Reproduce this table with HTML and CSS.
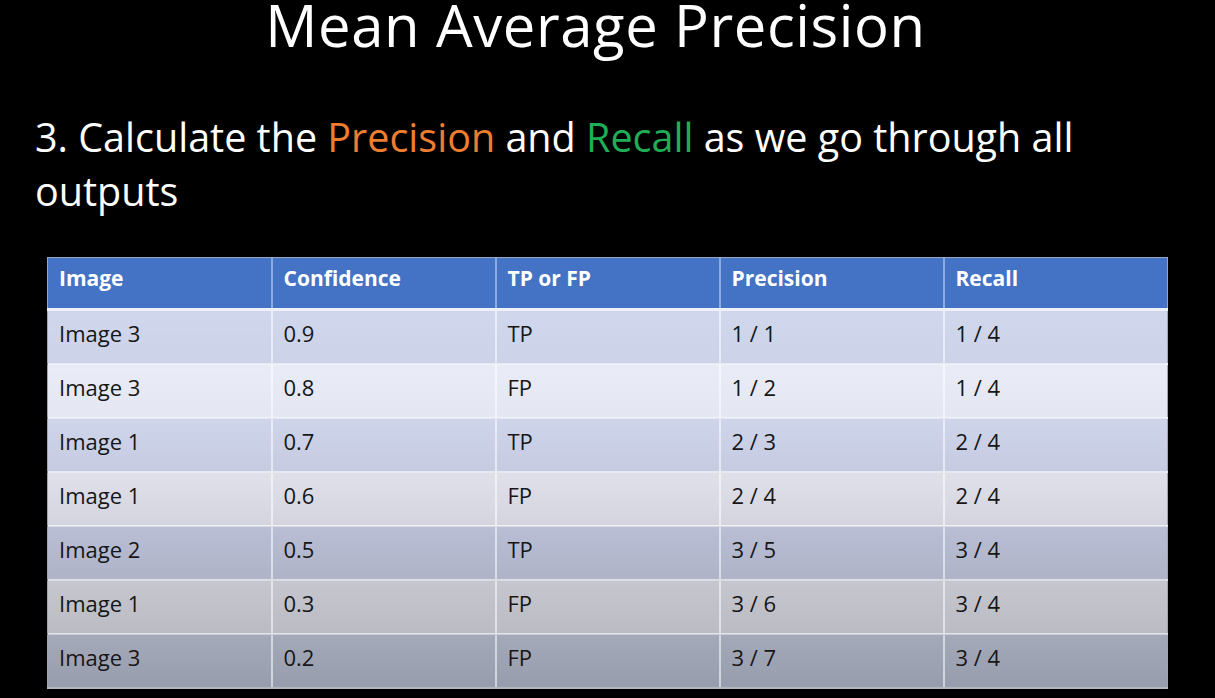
FILE: index.html
```html
<!DOCTYPE html>
<html>
<head>
<meta charset="utf-8">
<link rel="stylesheet" href="styles.css">
</head>
<body>
<div class="slide">
  <h1 class="title">Mean Average Precision</h1>
  <p class="subtitle">3. Calculate the <span class="prec">Precision</span> and <span class="rec">Recall</span> as we go through all outputs</p>
  <table class="grid">
    <thead>
      <tr><th>Image</th><th>Confidence</th><th>TP or FP</th><th>Precision</th><th>Recall</th></tr>
    </thead>
    <tbody>
      <tr><td>Image 3</td><td>0.9</td><td>TP</td><td>1 / 1</td><td>1 / 4</td></tr>
      <tr><td>Image 3</td><td>0.8</td><td>FP</td><td>1 / 2</td><td>1 / 4</td></tr>
      <tr><td>Image 1</td><td>0.7</td><td>TP</td><td>2 / 3</td><td>2 / 4</td></tr>
      <tr><td>Image 1</td><td>0.6</td><td>FP</td><td>2 / 4</td><td>2 / 4</td></tr>
      <tr><td>Image 2</td><td>0.5</td><td>TP</td><td>3 / 5</td><td>3 / 4</td></tr>
      <tr><td>Image 1</td><td>0.3</td><td>FP</td><td>3 / 6</td><td>3 / 4</td></tr>
      <tr><td>Image 3</td><td>0.2</td><td>FP</td><td>3 / 7</td><td>3 / 4</td></tr>
    </tbody>
  </table>
</div>
</body>
</html>
```
FILE: styles.css
```css
html, body {
  margin: 0;
  padding: 0;
  background: #000;
}
.slide {
  width: 1215px;
  height: 698px;
  overflow: hidden;
  font-family: "Open Sans", Lato, sans-serif;
  color: #fff;
}
.title {
  margin: -6px 0 0 0;
  font-weight: 400;
  font-size: 58px;
  letter-spacing: 0.6px;
  line-height: 62px;
  text-align: center;
  padding-right: 24px;
}
.subtitle {
  margin: 54px 0 0 35px;
  width: 1110px;
  font-size: 39.5px;
  line-height: 54px;
}
.prec { color: #ed7d31; }
.rec { color: #1fae55; }
.grid {
  margin: 39px 0 0 47px;
  border-collapse: collapse;
  width: 1120px;
  table-layout: fixed;
  color: #161616;
  font-size: 22px;
  line-height: 24px;
}
.grid th, .grid td {
  width: 224px;
  box-sizing: border-box;
  text-align: left;
  vertical-align: top;
  padding: 10px 11px 0;
}
.grid th {
  background: #4472c4;
  color: #fff;
  font-size: 21px;
  font-weight: 700;
  height: 52px;
  padding-top: 8px;
  border-left: 2px solid #8eaade;
  border-bottom: 3px solid #eef1f8;
}
.grid th:first-child { border-left: 1px solid #9aa6c0; }
.grid thead tr { border-top: 1px solid #9aa6c0; }
.grid td {
  height: 54px;
  border-left: 2px solid rgba(255,255,255,0.55);
  border-bottom: 2px solid rgba(255,255,255,0.5);
}
.grid td:first-child { border-left: 1px solid #a0a4b0; }
.grid td:last-child, .grid th:last-child { border-right: 1px solid #a0a4b0; }
.grid tbody tr:nth-child(1) td { background: linear-gradient(#d0d6eb, #ccd2e8); }
.grid tbody tr:nth-child(2) td { background: linear-gradient(#e9ebf6, #e4e6f2); }
.grid tbody tr:nth-child(3) td { background: linear-gradient(#ced4ea, #c6cbe1); }
.grid tbody tr:nth-child(4) td { background: linear-gradient(#dfe0ea, #d3d4de); }
.grid tbody tr:nth-child(5) td { background: linear-gradient(#b9bed5, #aeb3c7); }
.grid tbody tr:nth-child(6) td { background: linear-gradient(#c6c7ce, #babbc3); }
.grid tbody tr:nth-child(7) td { background: linear-gradient(#a4a9ba, #989dae); border-bottom-color: #b4b6bd; }
```
